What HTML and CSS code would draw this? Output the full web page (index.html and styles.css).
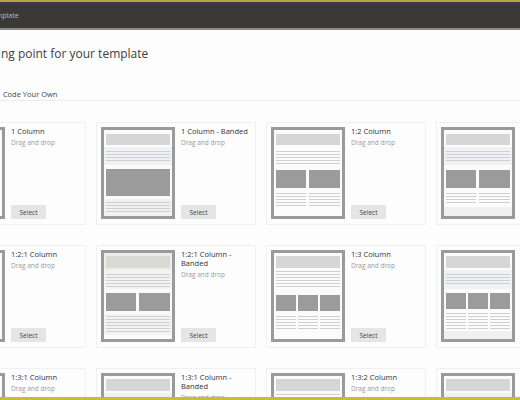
FILE: index.html
```html
<!DOCTYPE html>
<html lang="en">
<head>
<meta charset="utf-8">
<title>Select a Template</title>
<link rel="stylesheet" href="styles.css">
</head>
<body>
<svg class="defs" width="0" height="0" aria-hidden="true">
  <defs>
    <pattern id="ln" x="0" y="0" width="4" height="3" patternUnits="userSpaceOnUse">
      <rect width="4" height="1" fill="#cfcfcf"/>
    </pattern>
    <symbol id="frame" viewBox="0 0 74 92">
      <rect x="1.5" y="1.5" width="71" height="89" fill="#fbfbfb" stroke="#9a9a9a" stroke-width="3"/>
    </symbol>
    <symbol id="c1" viewBox="0 0 74 92">
      <use href="#frame"/>
      <rect x="5" y="7" width="64" height="11" fill="#d6d6d6"/>
      <rect x="5" y="21" width="64" height="14" fill="url(#ln)"/>
      <rect x="5" y="42" width="64" height="27" fill="#9b9b9b"/>
      <rect x="5" y="72" width="64" height="14" fill="url(#ln)"/>
    </symbol>
    <symbol id="c1b" viewBox="0 0 74 92">
      <use href="#frame"/>
      <rect x="5" y="7" width="64" height="11" fill="#d6d6d6"/>
      <rect x="3" y="20" width="68" height="18" fill="#eef2f5"/>
      <rect x="5" y="24" width="64" height="11" fill="url(#ln)"/>
      <rect x="5" y="42" width="64" height="27" fill="#9b9b9b"/>
      <rect x="3" y="72" width="68" height="17" fill="#f1f1f1"/>
      <rect x="5" y="75" width="64" height="11" fill="url(#ln)"/>
    </symbol>
    <symbol id="c12" viewBox="0 0 74 92">
      <use href="#frame"/>
      <rect x="5" y="7" width="64" height="11" fill="#d6d6d6"/>
      <rect x="5" y="24" width="64" height="14" fill="url(#ln)"/>
      <rect x="5" y="43" width="30" height="18" fill="#9b9b9b"/>
      <rect x="38" y="43" width="31" height="18" fill="#9b9b9b"/>
      <rect x="5" y="66" width="30" height="15" fill="url(#ln)"/>
      <rect x="38" y="66" width="31" height="15" fill="url(#ln)"/>
    </symbol>
    <symbol id="c12b" viewBox="0 0 74 92">
      <use href="#frame"/>
      <rect x="5" y="7" width="64" height="11" fill="#d6d6d6"/>
      <rect x="3" y="20" width="68" height="18" fill="#eef2f5"/>
      <rect x="5" y="24" width="64" height="11" fill="url(#ln)"/>
      <rect x="5" y="43" width="30" height="18" fill="#9b9b9b"/>
      <rect x="38" y="43" width="31" height="18" fill="#9b9b9b"/>
      <rect x="5" y="66" width="30" height="12" fill="url(#ln)"/>
      <rect x="38" y="66" width="31" height="12" fill="url(#ln)"/>
      <rect x="3" y="80" width="68" height="9" fill="#f0f0f0"/>
    </symbol>
    <symbol id="c121" viewBox="0 0 74 92">
      <use href="#frame"/>
      <rect x="5" y="7" width="64" height="11" fill="#d6d6d6"/>
      <rect x="5" y="21" width="64" height="17" fill="url(#ln)"/>
      <rect x="5" y="43" width="30" height="18" fill="#9b9b9b"/>
      <rect x="38" y="43" width="31" height="18" fill="#9b9b9b"/>
      <rect x="5" y="66" width="64" height="17" fill="url(#ln)"/>
    </symbol>
    <symbol id="c121b" viewBox="0 0 74 92">
      <use href="#frame"/>
      <rect x="3" y="3" width="68" height="17" fill="#ededed"/>
      <rect x="5" y="6" width="64" height="12" fill="#dadad4"/>
      <rect x="3" y="20" width="68" height="19" fill="#f3f3f3"/>
      <rect x="5" y="24" width="64" height="14" fill="url(#ln)"/>
      <rect x="5" y="43" width="30" height="18" fill="#9b9b9b"/>
      <rect x="38" y="43" width="31" height="18" fill="#9b9b9b"/>
      <rect x="3" y="64" width="68" height="21" fill="#f3f3f3"/>
      <rect x="5" y="66" width="64" height="17" fill="url(#ln)"/>
    </symbol>
    <symbol id="c13" viewBox="0 0 74 92">
      <use href="#frame"/>
      <rect x="5" y="6" width="64" height="12" fill="#d6d6d6"/>
      <rect x="5" y="21" width="64" height="17" fill="url(#ln)"/>
      <rect x="5" y="45" width="20" height="16" fill="#9b9b9b"/>
      <rect x="27" y="45" width="20" height="16" fill="#9b9b9b"/>
      <rect x="49" y="45" width="20" height="16" fill="#9b9b9b"/>
      <rect x="5" y="64" width="20" height="17" fill="url(#ln)"/>
      <rect x="27" y="64" width="20" height="17" fill="url(#ln)"/>
      <rect x="49" y="64" width="20" height="17" fill="url(#ln)"/>
    </symbol>
    <symbol id="c13b" viewBox="0 0 74 92">
      <use href="#frame"/>
      <rect x="5" y="6" width="64" height="12" fill="#d6d6d6"/>
      <rect x="3" y="20" width="68" height="19" fill="#eef2f5"/>
      <rect x="5" y="24" width="64" height="12" fill="url(#ln)"/>
      <rect x="5" y="43" width="20" height="16" fill="#9b9b9b"/>
      <rect x="27" y="43" width="20" height="16" fill="#9b9b9b"/>
      <rect x="49" y="43" width="20" height="16" fill="#9b9b9b"/>
      <rect x="5" y="63" width="20" height="17" fill="url(#ln)"/>
      <rect x="27" y="63" width="20" height="17" fill="url(#ln)"/>
      <rect x="49" y="63" width="20" height="17" fill="url(#ln)"/>
      <rect x="3" y="81" width="68" height="8" fill="#f0f0f0"/>
    </symbol>
  </defs>
</svg>

<div class="topline"></div>
<header class="appbar">
  <span class="crumb">Template</span>
</header>

<main class="page">
  <h1 class="heading">Select a starting point for your template</h1>
  <nav class="tabs">
    <span class="tab">Layouts</span>
    <span class="tab">Themes</span>
    <span class="tab active">Code Your Own</span>
  </nav>

  <div class="grid">
    <div class="card">
      <svg class="thumb" viewBox="0 0 74 92"><use href="#c1"/></svg>
      <div class="info"><div class="title">1 Column</div><div class="desc">Drag and drop</div><button class="select">Select</button></div>
    </div>
    <div class="card">
      <svg class="thumb" viewBox="0 0 74 92"><use href="#c1b"/></svg>
      <div class="info"><div class="title">1 Column - Banded</div><div class="desc">Drag and drop</div><button class="select">Select</button></div>
    </div>
    <div class="card">
      <svg class="thumb" viewBox="0 0 74 92"><use href="#c12"/></svg>
      <div class="info"><div class="title">1:2 Column</div><div class="desc">Drag and drop</div><button class="select">Select</button></div>
    </div>
    <div class="card">
      <svg class="thumb" viewBox="0 0 74 92"><use href="#c12b"/></svg>
      <div class="info"><div class="title">1:2 Column - Banded</div><div class="desc">Drag and drop</div><button class="select">Select</button></div>
    </div>

    <div class="card">
      <svg class="thumb" viewBox="0 0 74 92"><use href="#c121"/></svg>
      <div class="info"><div class="title">1:2:1 Column</div><div class="desc">Drag and drop</div><button class="select">Select</button></div>
    </div>
    <div class="card">
      <svg class="thumb" viewBox="0 0 74 92"><use href="#c121b"/></svg>
      <div class="info"><div class="title">1:2:1 Column - Banded</div><div class="desc">Drag and drop</div><button class="select">Select</button></div>
    </div>
    <div class="card">
      <svg class="thumb" viewBox="0 0 74 92"><use href="#c13"/></svg>
      <div class="info"><div class="title">1:3 Column</div><div class="desc">Drag and drop</div><button class="select">Select</button></div>
    </div>
    <div class="card">
      <svg class="thumb" viewBox="0 0 74 92"><use href="#c13b"/></svg>
      <div class="info"><div class="title">1:3 Column - Banded</div><div class="desc">Drag and drop</div><button class="select">Select</button></div>
    </div>

    <div class="card">
      <svg class="thumb" viewBox="0 0 74 92"><use href="#c13"/></svg>
      <div class="info"><div class="title">1:3:1 Column</div><div class="desc">Drag and drop</div><button class="select">Select</button></div>
    </div>
    <div class="card">
      <svg class="thumb" viewBox="0 0 74 92"><use href="#c13b"/></svg>
      <div class="info"><div class="title">1:3:1 Column - Banded</div><div class="desc">Drag and drop</div><button class="select">Select</button></div>
    </div>
    <div class="card">
      <svg class="thumb" viewBox="0 0 74 92"><use href="#c13"/></svg>
      <div class="info"><div class="title">1:3:2 Column</div><div class="desc">Drag and drop</div><button class="select">Select</button></div>
    </div>
    <div class="card">
      <svg class="thumb" viewBox="0 0 74 92"><use href="#c13b"/></svg>
      <div class="info"><div class="title">1:3:2 Column - Banded</div><div class="desc">Drag and drop</div><button class="select">Select</button></div>
    </div>
  </div>
</main>

<div class="bottomline"></div>
</body>
</html>
```

FILE: styles.css
```css
html, body {
  margin: 0;
  padding: 0;
}

body {
  height: 400px;
  display: flex;
  flex-direction: column;
  overflow: hidden;
  background: #fdfdfd;
  font-family: "Open Sans", "DejaVu Sans", sans-serif;
  color: #3c3c3c;
}

.defs {
  width: 0;
  height: 0;
  overflow: hidden;
  flex: none;
}

.topline {
  flex: none;
  height: 2px;
  background: #b4a642;
}

.appbar {
  flex: none;
  height: 26px;
  display: flex;
  align-items: center;
  background: linear-gradient(#3c3846 0, #3c3846 3px, #3a3936 3px, #3a3936 100%);
  border-bottom: 2px solid #8c8c8c;
}

.crumb {
  margin-left: -12px;
  font-size: 7px;
  color: #bcbcbc;
}

.page {
  flex: 1;
  min-height: 0;
  overflow: hidden;
  margin-left: -74px;
}

.heading {
  margin: 16px 0 0;
  font-size: 12px;
  line-height: 16px;
  font-weight: 400;
  color: #3e3e3e;
}

.tabs {
  margin-top: 26px;
  display: flex;
  gap: 11px;
  border-bottom: 1px solid #ececec;
}

.tab {
  font-size: 7.5px;
  line-height: 12px;
  color: #444;
}

.grid {
  margin-top: 21px;
  display: grid;
  grid-template-columns: repeat(4, 160px);
  column-gap: 10px;
  row-gap: 20px;
}

.card {
  box-sizing: border-box;
  height: 103px;
  padding: 4px 5px 5px 4px;
  border: 1px solid #f0f0f0;
  background: #fdfdfd;
  display: flex;
  gap: 6px;
}

.thumb {
  flex: none;
  width: 74px;
  height: 92px;
  display: block;
}

.info {
  flex: 1;
  min-width: 0;
  display: flex;
  flex-direction: column;
  align-items: flex-start;
}

.title {
  font-size: 7.5px;
  line-height: 9px;
  font-weight: 500;
  color: #333;
}

.desc {
  margin-top: 2px;
  font-size: 6.5px;
  line-height: 9px;
  color: #9a9a9a;
}

.select {
  margin-top: auto;
  width: 35px;
  height: 14px;
  padding: 0;
  border: none;
  background: #e5e5e5;
  font-family: inherit;
  font-size: 6.5px;
  color: #444;
}

.bottomline {
  flex: none;
  height: 3px;
  background: #c9bb3c;
}
```
